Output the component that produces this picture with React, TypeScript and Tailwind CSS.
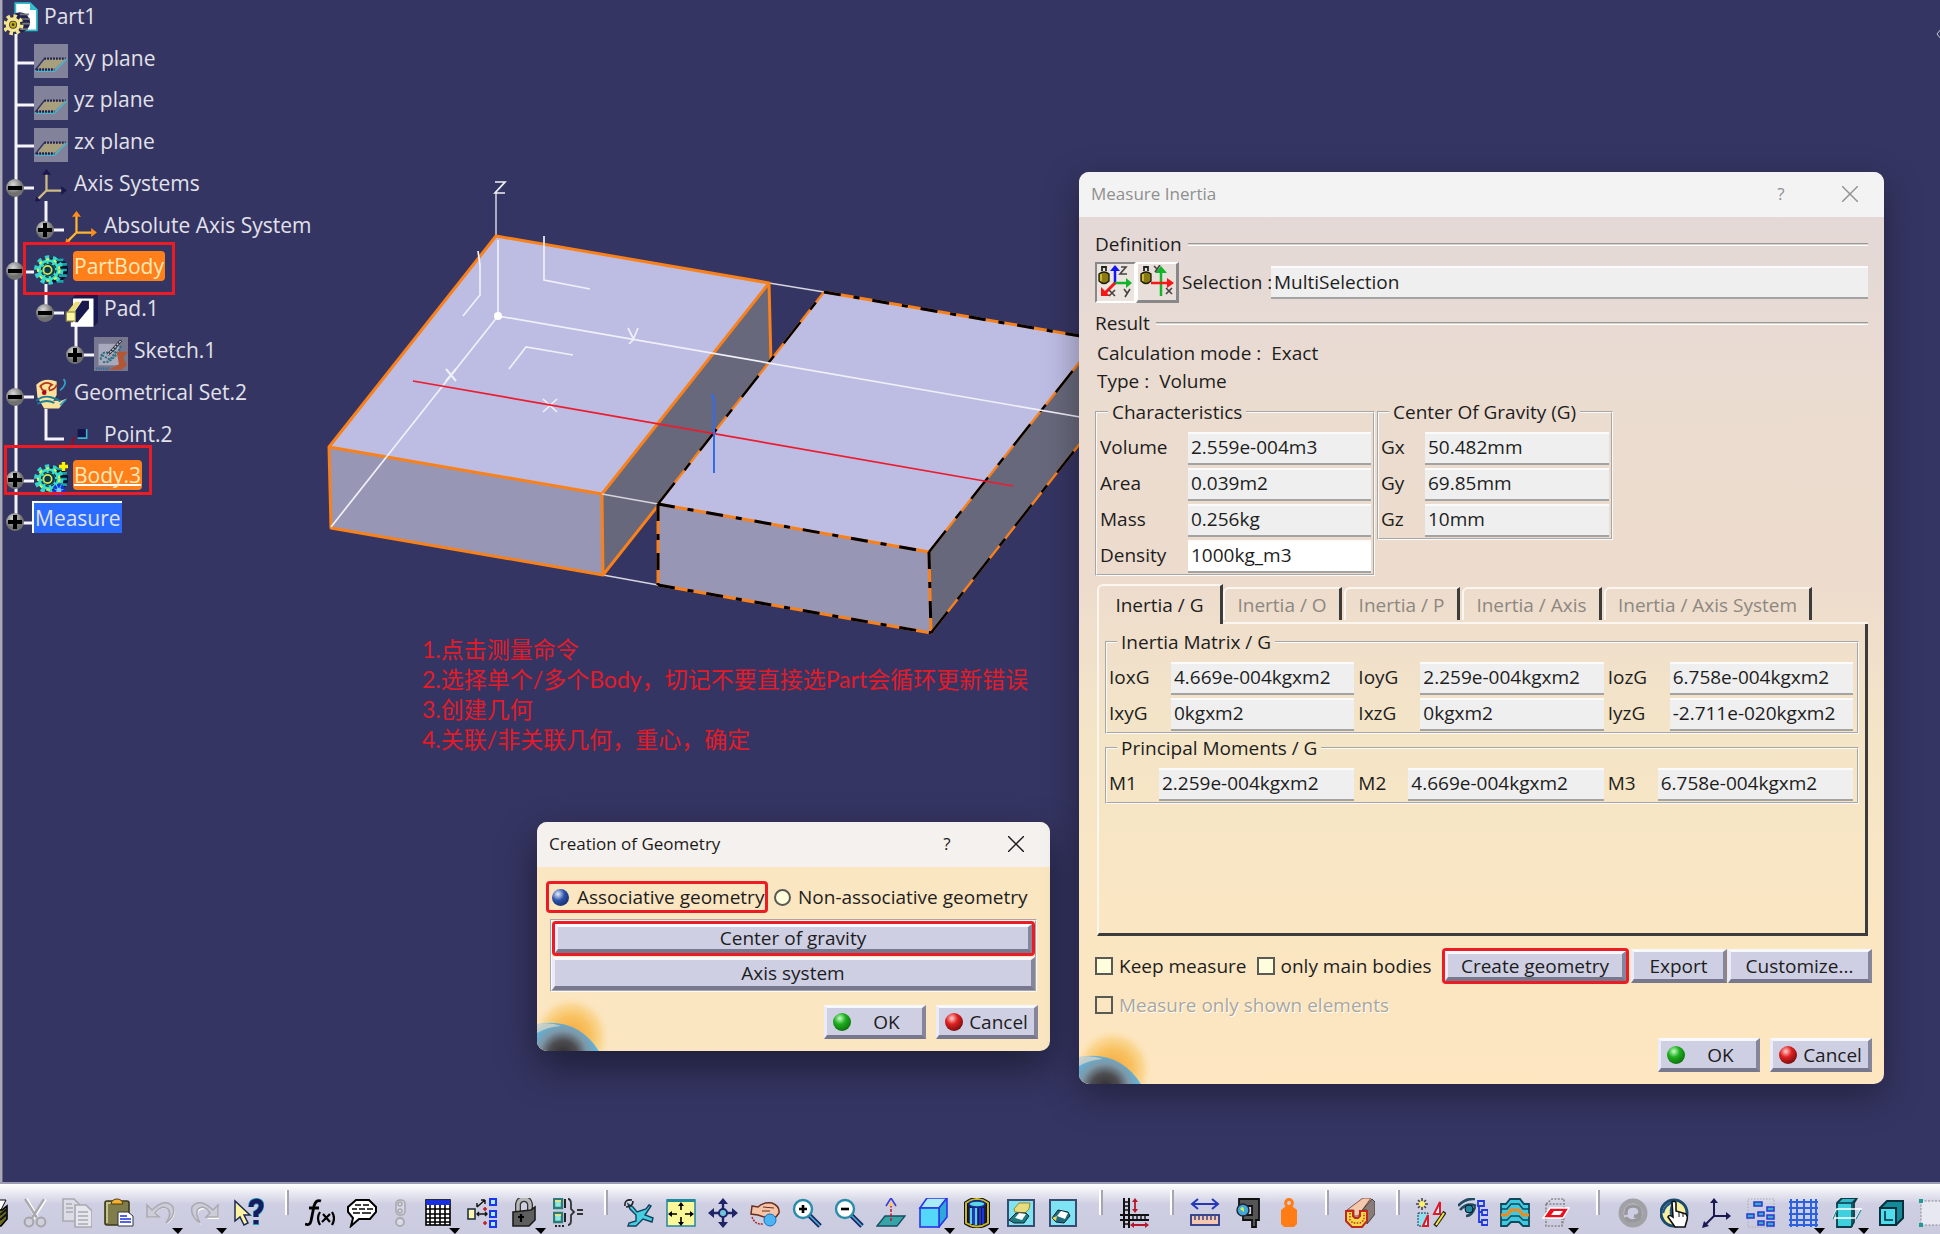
import React, { useState } from 'react';

const Svg = ({ children, size = 30 }: { children: React.ReactNode; size?: number }) => (
  <svg width={size} height={size} viewBox="0 0 30 30" fill="none" className="shrink-0">
    {children}
  </svg>
);

/* ---------- tree icons ---------- */

const PlaneIcon = () => (
  <Svg size={34}>
    <rect width="30" height="30" fill="#82829a" />
    <path d="M3 22L10 13H28L18 22Z" fill="#a89f7c" />
    <path d="M9 13H28" stroke="#1c1c4c" strokeWidth="2" strokeDasharray="1.6 1" />
    <path d="M1 23L9 13" stroke="#35355e" strokeWidth="1.2" />
    <path d="M1 24H18L29 13" stroke="#4fb3c8" strokeWidth="1.5" />
    <path d="M2 22.5H18" stroke="#1c1c4c" strokeWidth="2" strokeDasharray="1.6 1" />
  </Svg>
);

const PartIcon = () => (
  <Svg size={34}>
    <path d="M10 1H23L29 7V25H10Z" fill="#fff" stroke="#2fc0d0" strokeWidth="1.6" />
    <path d="M23 1V7H29Z" fill="#2fc0d0" />
    <circle cx="14" cy="18" r="9" fill="#22224e" />
    <path d="M14 11H22M16 15H23M16 19H23M14 24H21" stroke="#777" strokeWidth="1.5" />
    <circle cx="8" cy="20" r="7.5" stroke="#f5e68c" strokeWidth="3.5" strokeDasharray="3 2.9" />
    <circle cx="8" cy="20" r="5" fill="#353563" stroke="#f5e68c" strokeWidth="3" />
    <circle cx="8" cy="20" r="2" stroke="#c9b400" strokeWidth="1.5" />
  </Svg>
);

const AxisIcon = ({ color, tip }: { color: string; tip: string }) => (
  <Svg size={34}>
    <path d="M11 4V19H26M11 19L3 27" stroke={color} strokeWidth="2" />
    <path d="M11 0L15 5H7ZM29 19L24 15V23Z" fill={tip} />
    <path d="M1 29L2 24L6 28Z" fill={tip} />
  </Svg>
);

const GearIcon = ({ plus }: { plus?: boolean }) => (
  <Svg size={34}>
    <circle cx="19" cy="15" r="11" fill="#04102e" />
    <path d="M20 6H26M22 10H29M23 15H29M22 20H29M20 25H26" stroke="#1ba3a8" strokeWidth="2.4" />
    <circle cx="13" cy="15" r="11" stroke="#2fd6d0" strokeWidth="4" strokeDasharray="3.6 3.3" />
    <circle cx="13" cy="15" r="7.5" fill="#0b3a50" stroke="#39e0c8" strokeWidth="4" />
    <circle cx="13" cy="15" r="9.5" stroke="#d4f05a" strokeWidth="1.8" strokeDasharray="3 4" />
    <circle cx="13" cy="15" r="6.4" stroke="#0a2c48" strokeWidth="1.2" strokeDasharray="3 2" />
    <circle cx="12" cy="15" r="3.6" stroke="#d9e84a" strokeWidth="1.5" />
    {plus && (
      <>
        <path d="M26 0V8M22 4H30" stroke="#fff200" strokeWidth="3" />
        <circle cx="22" cy="25" r="4" fill="#6fd0ff" stroke="#1433e6" strokeWidth="3.4" strokeDasharray="2.6 0.8" />
      </>
    )}
  </Svg>
);

const PadIcon = () => (
  <Svg size={34}>
    <path d="M10 0H30V24L26 28V4H6Z" fill="#191950" />
    <path d="M8 3H26V28H6V24H8Z" fill="#fff" />
    <path d="M10 14L16 5H22V12L12 24H10Z" fill="#191950" />
    <path d="M3 15L10 6H15L9 15Z" fill="#e9dd78" />
    <rect x="2" y="15" width="8" height="8" fill="#fdf7a5" stroke="#8a8440" />
  </Svg>
);

const SketchIcon = () => (
  <Svg size={34}>
    <rect width="30" height="30" fill="#77778f" />
    <rect x="4" y="6" width="18" height="19" fill="#a9a9bd" />
    <path d="M6 20Q6 12 13 14Q18 14 22 5M8 22Q16 24 24 8M7 16L14 20L20 12" stroke="#2b6d7c" strokeWidth="1.6" strokeDasharray="2 1" />
    <path d="M12 16L24 3" stroke="#1c1c4c" strokeWidth="2.4" />
    <path d="M12 16L24 3" stroke="#d7d29a" strokeWidth="1.2" strokeDasharray="2 1" />
    <path d="M20 13H30L26 18L29 25L24 29H13L22 24Z" fill="#b25635" />
    <path d="M2 28H14" stroke="#2b6d9c" strokeWidth="2" strokeDasharray="1 1" />
  </Svg>
);

const GeoSetIcon = () => (
  <Svg size={34}>
    <path d="M2 6Q9 -1 20 3V15L17 20H24L29 18L22 27H9L3 17Z" fill="#fce29a" />
    <path d="M5 8Q10 2 16 6Q12 8 14 11Q19 10 20 6M6 6Q6 12 11 11" stroke="#b3371d" strokeWidth="1.5" />
    <circle cx="9" cy="13" r="2" fill="#b00020" />
    <path d="M2 20Q8 15 15 17T23 21M3 23Q10 18 18 22" stroke="#177f9a" strokeWidth="1.7" />
    <path d="M26 1Q30 5 23 11M23 24L28 19" stroke="#2fa3c8" strokeWidth="1.5" />
  </Svg>
);

const PointIcon = () => (
  <Svg size={34}>
    <rect x="12" y="8" width="8" height="8" fill="#15154d" />
    <path d="M20 8V16H12" stroke="#36b5cc" strokeWidth="1.4" />
    <path d="M3 26L8 22L7 19L10 15" stroke="#8e1020" strokeWidth="1.6" />
  </Svg>
);

const TREE = [
  { label: 'Part1', pad: 'pl-1', icon: <PartIcon /> },
  { label: 'xy plane', pad: 'pl-[34px]', icon: <PlaneIcon /> },
  { label: 'yz plane', pad: 'pl-[34px]', icon: <PlaneIcon /> },
  { label: 'zx plane', pad: 'pl-[34px]', icon: <PlaneIcon /> },
  { label: 'Axis Systems', pad: 'pl-[34px]', icon: <AxisIcon color="#cdbd84" tip="#1b1650" /> },
  { label: 'Absolute Axis System', pad: 'pl-[64px]', icon: <AxisIcon color="#ffb52e" tip="#ff8c1a" /> },
  { label: 'PartBody', pad: 'pl-[34px]', icon: <GearIcon />, look: 'bg-[#ff7f1a] text-[#ffe9b8] rounded-sm' },
  { label: 'Pad.1', pad: 'pl-[64px]', icon: <PadIcon /> },
  { label: 'Sketch.1', pad: 'pl-[94px]', icon: <SketchIcon /> },
  { label: 'Geometrical Set.2', pad: 'pl-[34px]', icon: <GeoSetIcon /> },
  { label: 'Point.2', pad: 'pl-[64px]', icon: <PointIcon /> },
  {
    label: 'Body.3',
    pad: 'pl-[34px]',
    icon: <GearIcon plus />,
    look: 'bg-[#ff7f1a] text-[#ffe9b8] rounded-sm underline decoration-white decoration-2 [text-decoration-skip-ink:none]',
  },
  { label: 'Measure', pad: 'pl-8', icon: null, look: 'bg-[#2a6cff] border-t-2 border-l-2 border-white' },
];

const KNOBS = [
  { x: 15, y: 188, open: true },
  { x: 45, y: 230, open: false },
  { x: 15, y: 271, open: true },
  { x: 45, y: 313, open: true },
  { x: 75, y: 355, open: false },
  { x: 15, y: 397, open: true },
  { x: 15, y: 480, open: false },
  { x: 15, y: 522, open: false },
];

const SpecTree = () => (
  <div className="relative flow-root">
    <svg width="140" height="540" className="absolute top-0 left-0">
      <defs>
        <radialGradient id="knob" cx="40%" cy="30%">
          <stop offset="0" stopColor="#d8d8d8" />
          <stop offset="1" stopColor="#707070" />
        </radialGradient>
      </defs>
      <path
        d="M16 34V522M16 63H34M16 105H34M16 146H34M16 188H34M46 201V230H64M16 272H34M46 284V313H64M76 326V355H94M16 397H34M46 409V439H64M16 481H34M16 523H34"
        stroke="#f4f4fa"
        strokeWidth="3"
        fill="none"
      />
      {KNOBS.map((k) => (
        <g key={`${k.x}-${k.y}`}>
          <circle cx={k.x} cy={k.y} r="9" fill="url(#knob)" />
          <path d={`M${k.x - 7} ${k.y}h14`} stroke="#000" strokeWidth="4" />
          {!k.open && <path d={`M${k.x} ${k.y - 7}v14`} stroke="#000" strokeWidth="4" />}
        </g>
      ))}
    </svg>
    <ul className="relative -mt-[5px] flex h-[543px] w-[340px] flex-col text-[21px] leading-[30px] text-[#e2e2ea]">
      {TREE.map((node) => (
        <li key={node.label} className={`flex flex-1 items-center ${node.pad}`}>
          {node.icon && <span className="mt-[7px] mr-[5px] shrink-0">{node.icon}</span>}
          <span className={`px-px whitespace-nowrap ${node.look ?? ''}`}>{node.label}</span>
        </li>
      ))}
    </ul>
    <div className="absolute top-[242px] left-[23px] h-[53px] w-[152px] border-[3px] border-[#ed1c24]" />
    <div className="absolute top-[445px] left-1 h-[50px] w-[148px] border-[3px] border-[#ed1c24]" />
  </div>
);

/* ---------- 3D scene ---------- */

const Scene = () => (
  <svg className="absolute inset-0 h-full w-full" fill="none">
    <g stroke="#d5d5de" strokeWidth="1.5">
      <path d="M769 283L824 292M603 575L658 585M496 193V236" />
    </g>
    <path d="M602 494L769 283L771 363L603 575Z" fill="#67687b" />
    <path d="M496 236L769 283L602 494L329 447Z" fill="#bdbce3" />
    <path d="M329 447L602 494L603 575L331 528Z" fill="#9896b5" />
    <g stroke="#fa8019" strokeWidth="3" strokeLinejoin="round">
      <path d="M496 236L769 283L771 363L603 575L331 528L329 447ZM329 447L602 494L603 575M602 494L769 283" />
    </g>
    <path d="M602 494L658 504" stroke="#d5d5de" strokeWidth="1.5" />

    <path d="M824 292L1098 339L929 552L658 504Z" fill="#bdbce3" />
    <path d="M658 504L929 552L931 633L658 585Z" fill="#9896b5" />
    <path d="M929 552L1098 339L1100 418L931 633Z" fill="#67687b" />
    <g stroke="#fa8019" strokeWidth="3">
      <path d="M824 292L1098 339M658 504L929 552M658 585L931 633M658 504V585M929 552L931 633" />
      <path d="M824 292L658 504M1098 339L929 552M1100 418L931 633" strokeWidth="2.4" />
    </g>
    <g stroke="#000" strokeWidth="3" strokeDasharray="17 13 6 13">
      <path d="M658 504L929 552M658 585L931 633M824 292L1098 339M658 504V585M929 552L931 633" />
      <path d="M658 504L824 292M929 552L1098 339M931 633L1100 418" strokeWidth="2.4" strokeDasharray="27 16 9 16" />
    </g>

    <g stroke="#f0f0f8" strokeWidth="1.7">
      <path d="M498 240V316L1080 417M498 316L331 527" />
      <path d="M478 251L480 265V295L463 316M544 236V280L590 289M509 369L526 347L573 355" />
      <path d="M543 399L557 412M557 399L543 412" />
      <path d="M495 182H505L495 193H505" />
      <path d="M446 369L456 381M456 369L446 381" strokeWidth="2" />
      <path d="M628 328L633 338M638 328L633 340L629 344" />
    </g>
    <circle cx="498" cy="316" r="4" fill="#fff" />
    <path d="M413 381L1013 486" stroke="#ec1b2e" strokeWidth="1.7" />
    <path d="M712 394L714 402V473" stroke="#2f6cf0" strokeWidth="2" />
    <path d="M1941 29L1937 34L1941 39" stroke="#c8c8d8" />
  </svg>
);

/* ---------- dialog pieces ---------- */

const BEVEL =
  'flex items-center justify-center border-t-[3px] border-l-[3px] border-r-4 border-b-4 border-t-[#f8f8ff] border-l-[#ebebfa] border-r-[#85859b] border-b-[#77778e] bg-[#cfcfe4] whitespace-nowrap';

const Ball = ({ color }: { color: 'green' | 'red' }) => (
  <span
    className={`h-[18px] w-[18px] shrink-0 rounded-full ${
      color === 'green'
        ? 'bg-[radial-gradient(circle_at_38%_30%,#c8ffc8,#1fae1f_35%,#034f03)]'
        : 'bg-[radial-gradient(circle_at_38%_30%,#ffd0d0,#e02020_35%,#3d0505)]'
    }`}
  />
);

const OkCancel = () => (
  <>
    <button type="button" className={`${BEVEL} h-[34px] w-[102px]`}>
      <span className="flex w-full items-center pl-1.5">
        <Ball color="green" />
        <span className="flex-1 text-center">OK</span>
      </span>
    </button>
    <button type="button" className={`${BEVEL} h-[34px] w-[102px] gap-1.5`}>
      <Ball color="red" />
      Cancel
    </button>
  </>
);

const TitleBar = ({ title, look }: { title: string; look: string }) => (
  <div className={`flex h-[45px] shrink-0 items-center pb-0.5 pl-3 text-[17px] ${look}`}>
    <h2 className="flex-1">{title}</h2>
    <button type="button" className="w-[70px] text-center" aria-label="Help">
      ?
    </button>
    <button type="button" className="flex w-[68px] justify-center" aria-label="Close">
      <svg width="16" height="16" stroke="currentColor" strokeWidth="1.4">
        <path d="M0 0L16 16M16 0L0 16" />
      </svg>
    </button>
  </div>
);

const Planet = ({ id }: { id: string }) => (
  <svg width="80" height="60" className="absolute bottom-0 left-0">
    <defs>
      <radialGradient id={`${id}-glow`}>
        <stop offset="0" stopColor="#f6a53c" />
        <stop offset="0.5" stopColor="#f8c262" />
        <stop offset="0.75" stopColor="#f9d080" stopOpacity="0.7" />
        <stop offset="1" stopColor="#fde6c0" stopOpacity="0" />
      </radialGradient>
      <radialGradient id={`${id}-body`} gradientUnits="userSpaceOnUse" cx="26" cy="64" r="40">
        <stop offset="0" stopColor="#2e2c2e" />
        <stop offset="0.35" stopColor="#4d4c50" />
        <stop offset="0.6" stopColor="#7d97a6" />
        <stop offset="0.85" stopColor="#62b4dc" />
        <stop offset="1" stopColor="#b9dbe2" />
      </radialGradient>
    </defs>
    <ellipse cx="34" cy="46" rx="40" ry="42" fill={`url(#${id}-glow)`} />
    <path d="M0 33Q40 26 62 60H0Z" fill={`url(#${id}-body)`} />
    <path d="M0 33Q14 31 24 35Q10 36 0 42Z" fill="#d6d2c4" opacity="0.8" />
  </svg>
);

const Field = ({ id, label, value, cols, editable }: {
  id: string;
  label: string;
  value: string;
  cols: string;
  editable?: boolean;
}) => (
  <div className={`grid h-9 items-center ${cols}`}>
    <label htmlFor={id} className="pb-0.5">
      {label}
    </label>
    <input
      id={id}
      defaultValue={value}
      readOnly={!editable}
      className={`h-[33px] w-full min-w-0 border-t-2 border-b-2 border-t-[#fbfbfb] border-b-[#a3a3a3] px-[3px] pb-0.5 ${
        editable ? 'bg-white' : 'bg-[#efefef]'
      }`}
    />
  </div>
);

const Group = ({ title, className, children }: {
  title: string;
  className: string;
  children: React.ReactNode;
}) => (
  <fieldset className={`min-w-0 border-2 border-[#fafafa] [border-style:groove] ${className}`}>
    <legend className="ml-2 h-7 px-1 leading-7">{title}</legend>
    {children}
  </fieldset>
);

const SectionTitle = ({ children }: { children: React.ReactNode }) => (
  <div className="flex h-7 items-center gap-1.5">
    <h3>{children}</h3>
    <div className="h-[3px] flex-1 border-t border-b border-t-[#999] border-b-white bg-[#d8d2cc]" />
  </div>
);

const CheckBox = ({ label, disabled }: { label: string; disabled?: boolean }) => (
  <label className={`flex items-center gap-1.5 ${disabled ? 'text-[#aaa69c] [text-shadow:1px_1px_0_#fff]' : ''}`}>
    <input
      type="checkbox"
      disabled={disabled}
      className={`h-[18px] w-[18px] appearance-none border-2 border-[#5a5a55] checked:bg-[#5a5a55] ${
        disabled ? 'bg-transparent' : 'bg-[#fffedc]'
      }`}
    />
    {label}
  </label>
);

const Cylinder = () => (
  <>
    <path d="M1 9Q6 5 11 9V16Q6 21 1 16Z" fill="#8a7a12" stroke="#1d1a05" strokeWidth="1.3" />
    <path d="M3 9V16" stroke="#d8c93a" strokeWidth="1.6" />
    <path d="M4 6V2H8V6" stroke="#222" strokeWidth="1.8" />
  </>
);

const TABS = [
  { name: 'Inertia / G', width: 'w-[126px]' },
  { name: 'Inertia / O', width: 'w-[121px]' },
  { name: 'Inertia / P', width: 'w-[118px]' },
  { name: 'Inertia / Axis', width: 'w-[142px]' },
  { name: 'Inertia / Axis System', width: 'w-[210px]' },
];

const MeasureInertia = () => {
  const [tab, setTab] = useState('Inertia / G');

  return (
    <section className="absolute top-[172px] left-[1079px] w-[805px] overflow-hidden rounded-[10px] bg-[linear-gradient(#e4d8d7,#e5d9d6_10%,#ebdcd0_25%,#eddccd_45%,#f4e5c7_62%,#fbe6c2_85%,#fde6c0)] text-[19px] leading-7 text-[#1d1d1d] shadow-[0_12px_36px_rgba(0,0,0,0.35)]">
      <TitleBar title="Measure Inertia" look="bg-[#f3f3f3] text-[#8f8f8f]" />
      <div className="px-4 pt-[13px]">
        <SectionTitle>Definition</SectionTitle>
        <div className="mt-1 flex h-[41px] items-center">
          <button
            type="button"
            aria-label="Measure Inertia 3D"
            className="flex h-[41px] w-[41px] items-center justify-center border-2 border-t-[#888] border-r-white border-b-white border-l-[#888] bg-[#ece4df]"
          >
            <svg width="35" height="35" viewBox="0 0 35 35" fill="none">
              <Cylinder />
              <path d="M17 18V4" stroke="#1616f5" strokeWidth="2.5" />
              <path d="M17 0L22 6H12Z" fill="#1616f5" />
              <path d="M17 18H29" stroke="#12b52a" strokeWidth="2.5" />
              <path d="M34 18L28 13V23Z" fill="#12b52a" />
              <path d="M17 18L7 28" stroke="#f51616" strokeWidth="3" />
              <path d="M3 31V22L12 31Z" fill="#f51616" />
              <path d="M23 2H28L22 9H29M11 25L17 31M17 25L11 31M26 24L29 28M32 24L27 32" stroke="#444" strokeWidth="1.6" />
            </svg>
          </button>
          <button
            type="button"
            aria-label="Measure Inertia 2D"
            className="flex h-[41px] w-[43px] items-center justify-center border-t-2 border-r-[3px] border-b-[3px] border-l-2 border-t-white border-r-[#888] border-b-[#888] border-l-white bg-[#e9dfda]"
          >
            <svg width="35" height="35" viewBox="0 0 35 35" fill="none">
              <Cylinder />
              <path d="M21 31V5" stroke="#12b52a" strokeWidth="2.5" />
              <path d="M21 1L27 8H15Z" fill="#12b52a" />
              <path d="M11 18H28" stroke="#f51616" strokeWidth="2.5" />
              <path d="M34 18L27 13V23Z" fill="#f51616" />
              <path d="M14 1L17 4M20 0L15 7M26 23L32 29M32 23L26 29" stroke="#444" strokeWidth="1.6" />
            </svg>
          </button>
          <label htmlFor="selection" className="w-[92px] pb-0.5 pl-[3px] whitespace-nowrap">
            Selection :
          </label>
          <input
            id="selection"
            readOnly
            defaultValue="MultiSelection"
            className="h-[33px] min-w-0 flex-1 border-t-2 border-b-2 border-t-[#fbfbfb] border-b-[#a3a3a3] bg-[#efefef] px-[3px] pb-0.5"
          />
        </div>
        <div className="mt-1.5">
          <SectionTitle>Result</SectionTitle>
        </div>
        <p className="mt-0.5 flex gap-2.5 pl-0.5">
          <span>Calculation mode :</span>
          <span>Exact</span>
        </p>
        <p className="flex gap-2.5 pl-0.5">
          <span>Type :</span>
          <span>Volume</span>
        </p>

        <div className="mt-[3px] flex items-start gap-0.5">
          <Group title="Characteristics" className="w-[280px] pt-1 pr-0.5 pl-[3px]">
            <Field id="volume" label="Volume" value="2.559e-004m3" cols="grid-cols-[88px_1fr]" />
            <Field id="area" label="Area" value="0.039m2" cols="grid-cols-[88px_1fr]" />
            <Field id="mass" label="Mass" value="0.256kg" cols="grid-cols-[88px_1fr]" />
            <Field id="density" label="Density" value="1000kg_m3" cols="grid-cols-[88px_1fr]" editable />
          </Group>
          <Group title="Center Of Gravity (G)" className="w-[236px] pt-1 pr-0.5 pl-0.5">
            <Field id="gx" label="Gx" value="50.482mm" cols="grid-cols-[44px_1fr]" />
            <Field id="gy" label="Gy" value="69.85mm" cols="grid-cols-[44px_1fr]" />
            <Field id="gz" label="Gz" value="10mm" cols="grid-cols-[44px_1fr]" />
          </Group>
        </div>

        <div className="mt-2 ml-0.5 flex h-10 items-stretch" role="tablist">
          {TABS.map((t) => (
            <div
              key={t.name}
              className={`${t.width} shrink-0 ${
                tab === t.name ? '' : 'border-b-2 border-[#fbf6f0] pt-[3px] pr-0.5 pb-0.5'
              }`}
            >
              <button
                type="button"
                role="tab"
                aria-selected={tab === t.name}
                onClick={() => setTab(t.name)}
                className={`h-full w-full rounded-tl-md border-t-2 border-r-[3px] border-l-2 border-t-[#fbf6f0] border-r-[#3c3c3c] border-l-[#fbf6f0] whitespace-nowrap ${
                  tab === t.name ? '' : 'text-[#8d8782]'
                }`}
              >
                {t.name}
              </button>
            </div>
          ))}
          <div className="flex-1 border-b-2 border-[#fbf6f0]" />
        </div>
        <div className="ml-0.5 h-[312px] border-r-[3px] border-b-[3px] border-l-2 border-r-[#3c3c3c] border-b-[#3c3c3c] border-l-[#fbf6f0] px-1.5 pt-1">
          <Group title="Inertia Matrix / G" className="pt-1 pr-1 pl-0.5">
            <div className="grid grid-cols-3 gap-x-1">
              <Field id="ioxg" label="IoxG" value="4.669e-004kgxm2" cols="grid-cols-[62px_1fr]" />
              <Field id="ioyg" label="IoyG" value="2.259e-004kgxm2" cols="grid-cols-[62px_1fr]" />
              <Field id="iozg" label="IozG" value="6.758e-004kgxm2" cols="grid-cols-[62px_1fr]" />
              <Field id="ixyg" label="IxyG" value="0kgxm2" cols="grid-cols-[62px_1fr]" />
              <Field id="ixzg" label="IxzG" value="0kgxm2" cols="grid-cols-[62px_1fr]" />
              <Field id="iyzg" label="IyzG" value="-2.711e-020kgxm2" cols="grid-cols-[62px_1fr]" />
            </div>
          </Group>
          <Group title="Principal Moments / G" className="pt-1 pr-1 pl-0.5">
            <div className="grid grid-cols-3 gap-x-1">
              <Field id="m1" label="M1" value="2.259e-004kgxm2" cols="grid-cols-[50px_1fr]" />
              <Field id="m2" label="M2" value="4.669e-004kgxm2" cols="grid-cols-[50px_1fr]" />
              <Field id="m3" label="M3" value="6.758e-004kgxm2" cols="grid-cols-[50px_1fr]" />
            </div>
          </Group>
        </div>
      </div>

      <div className="mt-3 flex h-9 items-center pr-3 pl-4">
        <div className="flex flex-1 gap-2.5">
          <CheckBox label="Keep measure" />
          <CheckBox label="only main bodies" />
        </div>
        <div className="mr-0.5 flex h-9 w-[187px] rounded-sm border-[3px] border-[#ed1c24]">
          <button type="button" className={`${BEVEL} flex-1`}>
            Create geometry
          </button>
        </div>
        <button type="button" className={`${BEVEL} mr-px h-[34px] w-24`}>
          Export
        </button>
        <button type="button" className={`${BEVEL} h-[34px] w-36`}>
          Customize...
        </button>
      </div>
      <div className="mt-[7px] pl-4">
        <CheckBox label="Measure only shown elements" disabled />
      </div>
      <div className="relative mt-[19px] flex justify-end gap-2.5 pr-3 pb-3">
        <Planet id="inertia" />
        <OkCancel />
      </div>
    </section>
  );
};

const RADIO =
  'h-[17px] w-[17px] shrink-0 appearance-none rounded-full border-2 border-[#5a5a55] bg-[#fffedc] checked:border-0 checked:bg-[radial-gradient(circle_at_35%_30%,#e6eeff,#2c52a8_40%,#0a1a50)]';

const CreationOfGeometry = () => (
  <section className="absolute top-[822px] left-[537px] w-[513px] overflow-hidden rounded-[10px] bg-[#fbe6c2] text-[19px] leading-7 text-[#1d1d1d] shadow-[0_16px_40px_rgba(0,0,0,0.45)]">
    <TitleBar title="Creation of Geometry" look="bg-[#f5f1ee] text-[#1a1a1a]" />
    <div className="mt-3.5 flex h-8 items-center gap-1.5 pl-[9px] whitespace-nowrap">
      <label className="flex h-8 w-[222px] items-center gap-2 rounded-sm border-[3px] border-[#ed1c24] pl-[3px]">
        <input type="radio" name="assoc" defaultChecked className={RADIO} />
        Associative geometry
      </label>
      <label className="flex items-center gap-[7px]">
        <input type="radio" name="assoc" className={RADIO} />
        Non-associative geometry
      </label>
    </div>
    <div className="mx-[13px] mt-1.5 flex flex-col gap-px border-2 border-[#fafafa] [border-style:groove]">
      <div className="flex h-[35px] rounded-sm border-[3px] border-[#ed1c24]">
        <button type="button" className={`${BEVEL} flex-1`}>
          Center of gravity
        </button>
      </div>
      <button type="button" className={`${BEVEL} h-[33px]`}>
        Axis system
      </button>
    </div>
    <div className="relative mt-[13px] flex justify-end gap-2.5 pr-3 pb-3">
      <Planet id="creation" />
      <OkCancel />
    </div>
  </section>
);

/* ---------- bottom toolbar ---------- */

type Tool = { name: string; icon: React.ReactNode; menu?: boolean; slim?: boolean };

const GROUPS: Tool[][] = [
  [
    {
      name: 'Print',
      icon: (
        <>
          <path d="M14 2H28L22 14H12Z" fill="#fff" stroke="#000" />
          <path d="M10 12H24L29 8V21L23 28H10Z" fill="#6b6b1e" stroke="#000" strokeWidth="1.6" />
          <path d="M22 17L29 11M22 22L29 16" stroke="#111" strokeWidth="2" />
        </>
      ),
    },
    {
      name: 'Cut',
      icon: (
        <>
          <path d="M6 1L17 20M25 1L13 20" stroke="#fff" strokeWidth="4" />
          <path d="M5 1L17 20M24 1L12 20" stroke="#a9a9b0" strokeWidth="2.4" />
          <circle cx="9" cy="24" r="4.4" fill="#d0d0dc" stroke="#a4a4aa" strokeWidth="2" />
          <circle cx="21" cy="24" r="4.4" fill="#d0d0dc" stroke="#a4a4aa" strokeWidth="2" />
        </>
      ),
    },
    {
      name: 'Copy',
      icon: (
        <>
          <path d="M1 1H12L17 6V23H1Z" fill="#dcdce6" stroke="#a9a9b0" strokeWidth="1.6" />
          <path d="M13 7H24L30 13V29H13Z" fill="#e6e6ee" stroke="#a9a9b0" strokeWidth="1.6" />
          <path d="M4 6H10M4 10H11M4 14H11M16 14H26M16 18H26M16 22H26M16 26H26" stroke="#a9a9b0" strokeWidth="1.4" />
        </>
      ),
    },
    {
      name: 'Paste',
      icon: (
        <>
          <rect x="1" y="3" width="24" height="24" rx="2" fill="#7f7d4c" stroke="#3c3a18" strokeWidth="1.6" />
          <path d="M3 25V5H12" stroke="#c6c48e" strokeWidth="2" />
          <path d="M7 6Q8 1 13 1T19 6Z" fill="#f0b432" stroke="#5a3a08" />
          <path d="M14 14H24L29 18V28H14Z" fill="#fff" stroke="#334" />
          <path d="M16 18H23M16 21H27M16 24H27" stroke="#1b2fe0" strokeWidth="1.5" />
        </>
      ),
    },
    {
      name: 'Undo',
      menu: true,
      icon: (
        <>
          <path d="M2 9V20H14L10 16Q16 7 22 12Q26 17 21 26Q31 19 28 10Q21 0 7 13Z" fill="#fff" />
          <path d="M1 7V19H13L9 15Q16 6 22 11Q26 16 20 25Q30 18 27 9Q20 -1 6 12Z" fill="#cdcdda" stroke="#a9a9b0" strokeWidth="1.5" />
        </>
      ),
    },
    {
      name: 'Redo',
      menu: true,
      icon: (
        <>
          <path d="M29 9V21H17L21 17Q15 8 9 13Q6 18 11 27Q1 20 3 11Q10 1 24 13Z" fill="#fff" />
          <path d="M28 7V19H16L20 15Q14 6 8 11Q5 16 10 25Q0 18 2 9Q9 -1 23 12Z" fill="#cdcdda" stroke="#a9a9b0" strokeWidth="1.5" />
        </>
      ),
    },
    {
      name: "What's This?",
      icon: (
        <>
          <path d="M1 3V23L6 19L10 27L14 25L10 17H16Z" fill="#fdf3a0" stroke="#1c2a52" strokeWidth="1.5" />
          <path d="M17 9Q17 3 23 3Q28 4 27 9Q26 13 22 15V19M22 22V27" stroke="#17a3b8" strokeWidth="6" />
          <path d="M17 9Q17 3 23 3Q28 4 27 9Q26 13 22 15V19M22 22V26" stroke="#1b1a60" strokeWidth="4.6" />
        </>
      ),
    },
  ],
  [
    {
      name: 'Formula',
      icon: (
        <>
          <path d="M16 3Q11 1 9 8L6 23Q5 28 0 26M4 10H14" stroke="#000" strokeWidth="2.8" />
          <path d="M15 14Q11 20 15 27M27 14Q31 20 27 27M18 16L25 24M25 16L17 24" stroke="#000" strokeWidth="2.2" />
        </>
      ),
    },
    {
      name: 'Comment',
      icon: (
        <>
          <path d="M9 2H22L29 9V14L23 21H12L4 28L6 20L1 14V9Z" fill="#fff" stroke="#000" strokeWidth="2" />
          <path d="M8 7H14M16 7H22M5 11H10M12 11H18M20 11H26M6 15H13M15 15H24" stroke="#000" strokeWidth="1.6" />
        </>
      ),
    },
    {
      name: 'Check',
      slim: true,
      icon: (
        <>
          <rect x="11" y="2" width="9" height="15" rx="4" fill="#dadae6" stroke="#a9a9b0" strokeWidth="1.6" />
          <circle cx="15" cy="6" r="2" stroke="#a9a9b0" strokeWidth="1.6" />
          <circle cx="15" cy="13" r="2" stroke="#a9a9b0" strokeWidth="1.6" />
          <circle cx="15" cy="24" r="4" fill="#dadae6" stroke="#a9a9b0" strokeWidth="1.8" />
        </>
      ),
    },
    {
      name: 'Design Table',
      menu: true,
      icon: (
        <>
          <rect x="3" y="2" width="24" height="25" fill="#fff" stroke="#000" strokeWidth="1.6" />
          <rect x="3" y="2" width="24" height="5" fill="#1a2fe0" />
          <path d="M7 7V27M12 7V27M17 7V27M22 7V27M3 11H27M3 16H27M3 20H27M3 24H27" stroke="#000" strokeWidth="1.6" />
        </>
      ),
    },
    {
      name: 'Knowledge Inspector',
      icon: (
        <>
          <rect x="1" y="11" width="7" height="10" fill="#fdf6b0" stroke="#234" strokeWidth="1.6" />
          <path d="M10 9L18 2M18 2V6M18 2H14M10 9V5M10 16H20M12 14L10 16L12 18M18 14L20 16L18 18" stroke="#111" strokeWidth="1.4" />
          <path d="M18 9V13M16 11H20M18 23V27M16 25H20" stroke="#c41a2a" strokeWidth="1.6" />
          <path d="M23 1H29V7H23ZM23 13H29V19H23ZM23 23H29V29H23Z" fill="#aeeaf8" stroke="#1b36f0" strokeWidth="2" />
        </>
      ),
    },
    {
      name: 'Lock',
      menu: true,
      icon: (
        <>
          <path d="M9 14V6Q10 1 15 1Q20 1 21 6V13" stroke="#333" strokeWidth="6" />
          <path d="M9 14V6Q10 1 15 1Q20 1 21 6V13" stroke="#b8b8b8" strokeWidth="3.4" />
          <path d="M4 14L22 12L26 9V22L20 28H4Z" fill="#5e5e5e" stroke="#1c1c1c" strokeWidth="1.6" />
          <path d="M12 16V24M9 19H15" stroke="#000" strokeWidth="2.2" />
        </>
      ),
    },
    {
      name: 'Equivalent Dimensions',
      icon: (
        <>
          <path d="M1 1H9V10H1ZM1 15H9V24H1Z" fill="#8fe8e0" stroke="#2b7c78" strokeWidth="2.4" />
          <path d="M2 3H8M2 17H8" stroke="#e8e080" strokeWidth="2" />
          <path d="M12 1V10M12 15V24" stroke="#222" strokeWidth="2" />
          <path d="M15 1Q18 1 18 6V11L21 14L18 17V22Q18 27 15 27M24 12H31M24 16H31" stroke="#333" strokeWidth="1.8" />
          <path d="M2 28H11" stroke="#222" strokeWidth="2" strokeDasharray="2 1.5" />
        </>
      ),
    },
  ],
  [
    {
      name: 'Fly Mode',
      icon: (
        <>
          <path d="M4 6L9 9L13 14L22 11L25 7L27 8L21 17L29 20L28 24L19 21L12 28L4 28L5 25L12 23L12 17L6 11Z" fill="#46cfe0" stroke="#14405e" strokeWidth="1.4" />
          <path d="M1 8Q0 1 8 2M2 9Q9 9 9 3" stroke="#222" strokeWidth="1.6" />
        </>
      ),
    },
    {
      name: 'Fit All In',
      icon: (
        <>
          <rect x="1" y="2" width="28" height="26" fill="#fbf89a" stroke="#2c8ca0" strokeWidth="1.6" />
          <rect x="1" y="1" width="28" height="3" fill="#1f8a9c" />
          <path d="M15 6V12M15 19V26M4 16H11M19 16H26" stroke="#000" strokeWidth="1.6" />
          <path d="M15 4L18 8H12ZM15 28L18 24H12ZM2 16L6 13V19ZM28 16L24 13V19Z" fill="#000" />
        </>
      ),
    },
    {
      name: 'Pan',
      icon: (
        <>
          <path d="M15 4V26M4 15H26" stroke="#1d2468" strokeWidth="2.4" />
          <path d="M15 0L20 6H10ZM15 30L20 24H10ZM0 15L6 10V20ZM30 15L24 10V20Z" fill="#1d2468" />
          <circle cx="15" cy="15" r="4" fill="#6fc6dc" stroke="#1d2468" strokeWidth="2" />
        </>
      ),
    },
    {
      name: 'Rotate',
      icon: (
        <>
          <path d="M2 8L8 9Q13 4 22 5Q30 8 29 15L26 19H14L8 17L1 16Z" fill="#f4c4a8" stroke="#6a2c1c" strokeWidth="1.5" />
          <path d="M13 9L24 10M12 13H20" stroke="#6a2c1c" />
          <circle cx="20" cy="22" r="6" fill="#4cb4f0" stroke="#1b6cc0" />
          <path d="M2 19Q5 27 13 26" stroke="#b02a20" strokeWidth="1.5" strokeDasharray="2 1" />
        </>
      ),
    },
    {
      name: 'Zoom In',
      icon: (
        <>
          <path d="M17 17L28 28" stroke="#1b2468" strokeWidth="5" />
          <path d="M17 17L28 28" stroke="#4cb4d0" strokeWidth="1.6" />
          <circle cx="11" cy="11" r="9" fill="#fff" stroke="#2a8ca8" strokeWidth="2.4" />
          <path d="M11 7V15M7 11H15" stroke="#000" strokeWidth="2.6" />
        </>
      ),
    },
    {
      name: 'Zoom Out',
      icon: (
        <>
          <path d="M17 17L28 28" stroke="#1b2468" strokeWidth="5" />
          <path d="M17 17L28 28" stroke="#4cb4d0" strokeWidth="1.6" />
          <circle cx="11" cy="11" r="9" fill="#fff" stroke="#2a8ca8" strokeWidth="2.4" />
          <path d="M7 11H15" stroke="#000" strokeWidth="2.6" />
        </>
      ),
    },
    {
      name: 'Normal View',
      icon: (
        <>
          <path d="M1 28L9 18H29L21 28Z" fill="#35a5a8" stroke="#184c60" strokeWidth="1.3" />
          <path d="M15 23V5" stroke="#c41a2a" strokeWidth="1.6" strokeDasharray="3 1.5" />
          <path d="M10 8L15 0L20 8" stroke="#3a3ae0" strokeWidth="1.6" />
          <path d="M15 3L18 8H12Z" fill="#f8c860" />
        </>
      ),
    },
    {
      name: 'Isometric View',
      menu: true,
      icon: (
        <>
          <path d="M2 10L9 0H29L21 10Z" fill="#a9ecf8" stroke="#2a36e8" strokeWidth="1.6" />
          <path d="M21 10L29 0V19L21 29Z" fill="#2da8d8" stroke="#2a36e8" strokeWidth="1.6" />
          <rect x="2" y="10" width="19" height="19" fill="#55d8f8" stroke="#2a36e8" strokeWidth="1.6" />
        </>
      ),
    },
    {
      name: 'Shading with Edges',
      menu: true,
      icon: (
        <>
          <path d="M4 5V25Q15 32 26 25V5Q15 -3 4 5Z" fill="#1b1b40" stroke="#111" strokeWidth="4" />
          <path d="M4 5V25Q15 32 26 25V5Q15 -3 4 5Z" stroke="#c8b820" strokeWidth="2" />
          <ellipse cx="15" cy="6" rx="8" ry="3" fill="#5ad8e8" stroke="#1430a0" strokeWidth="1.5" />
          <path d="M9 10V26M14 10V27" stroke="#59d0f0" strokeWidth="2.4" />
          <path d="M12 10V27M18 10V27M21 10V26" stroke="#1b36e0" strokeWidth="2" />
        </>
      ),
    },
    {
      name: 'Hide/Show',
      icon: (
        <>
          <rect x="2" y="2" width="26" height="26" fill="#7ee4f4" stroke="#3a4a70" strokeWidth="2" />
          <path d="M8 11L13 5H24L23 11L19 15L9 14Z" fill="#e8dc80" stroke="#9a8a20" />
          <path d="M3 22L10 15H20L23 18L18 25H8Z" fill="#1f7c80" stroke="#123" />
          <path d="M9 20L13 15L20 16L16 22Z" fill="#fff" />
        </>
      ),
    },
    {
      name: 'Swap Visible Space',
      icon: (
        <>
          <rect x="2" y="2" width="26" height="26" fill="#7ee4f4" stroke="#3a4a70" strokeWidth="2" />
          <path d="M4 20L10 12L20 14L22 18L16 25L8 24Z" fill="#1f6c80" stroke="#123" />
          <path d="M9 18L13 13L20 15L17 21Z" fill="#fff" />
          <path d="M4 20L9 18L8 23Z" fill="#f0d850" />
        </>
      ),
    },
  ],
  [
    {
      name: 'Measure Between',
      icon: (
        <>
          <path d="M5 0V30M10 0V30M1 17H30M1 22H30" stroke="#111" strokeWidth="2" />
          <path d="M5 4H10M5 8H10M5 12H10M5 26H10M14 17V22M18 17V22M22 17V22M26 17V22" stroke="#111" strokeWidth="1.4" />
          <path d="M16 2V13M13 27H28" stroke="#b5182a" strokeWidth="1.8" />
          <path d="M16 0L19 4H13ZM16 15L19 11H13ZM11 27L15 24V30ZM30 27L26 24V30Z" fill="#b5182a" />
        </>
      ),
    },
  ],
  [
    {
      name: 'Measure Distance',
      icon: (
        <>
          <path d="M2 6H28M8 1L2 6L8 11M22 1L28 6L22 11" stroke="#2238b8" strokeWidth="2" />
          <rect x="1" y="17" width="28" height="10" fill="#f6c8b0" stroke="#283a88" strokeWidth="1.8" />
          <path d="M5 18V22M9 18V22M13 18V22M17 18V22M21 18V22M25 18V22" stroke="#283a88" strokeWidth="1.4" />
        </>
      ),
    },
    {
      name: 'Measure Item',
      icon: (
        <>
          <path d="M7 1H27V22H24V29H20V22H11V17H20V8H7Z" fill="#555" stroke="#111" strokeWidth="1.8" />
          <circle cx="11" cy="12" r="6" fill="#3fa8d8" stroke="#223" strokeWidth="1.4" />
          <path d="M8 11Q12 6 12 14Z" fill="#d8f040" />
        </>
      ),
    },
    {
      name: 'Measure Inertia',
      icon: (
        <>
          <circle cx="15" cy="5" r="3.4" stroke="#ff7d14" strokeWidth="3" />
          <path d="M7 12L12 8H18L23 12V26L20 29H10L7 26Z" fill="#ff7d14" />
        </>
      ),
    },
  ],
  [
    {
      name: 'Catalog',
      icon: (
        <>
          <path d="M2 12L18 0H26L13 18H9V12Z" fill="#f4c8ac" stroke="#8a5040" />
          <path d="M14 16L27 1L30 4V16L22 26V12H18Z" fill="#8a7a78" stroke="#444" />
          <path d="M1 13H8V18L10 20H13L15 18V13H22V23L17 29H7L1 23Z" fill="#f6d84a" stroke="#c0281c" strokeWidth="2" />
          <path d="M5 15V22L8 25H15L19 22V15" stroke="#c0281c" strokeWidth="1.4" strokeDasharray="1.5 1.5" />
        </>
      ),
    },
  ],
  [
    {
      name: 'Draft Analysis',
      icon: (
        <>
          <path d="M6 0V12M0 6H12M2 2L10 10M10 2L2 10" stroke="#444" strokeWidth="1.6" />
          <circle cx="6" cy="6" r="3" fill="#fff26a" />
          <path d="M2 15H12V28H2Z" fill="#8ee0f0" stroke="#234" strokeDasharray="2 1" />
          <path d="M7 28L12 17V28ZM18 16L24 4V16Z" fill="#fff" stroke="#e01a2a" strokeWidth="2" />
          <path d="M29 14L19 28" stroke="#222" strokeWidth="4" />
          <path d="M28 15L20 27" stroke="#f6e83a" strokeWidth="2" />
        </>
      ),
    },
    {
      name: 'Show Structure',
      icon: (
        <>
          <path d="M0 8Q7 0 17 1M2 12Q9 4 18 8M8 18Q14 18 17 9" stroke="#1f4a60" strokeWidth="2.6" />
          <circle cx="11" cy="11" r="4" fill="#1f8aa0" stroke="#012" />
          <path d="M20 3H26V8H20ZM24 12H30V17H24ZM24 22H30V27H24ZM21 8V24H24M21 14H24" stroke="#2238e0" strokeWidth="1.8" fill="none" />
        </>
      ),
    },
    {
      name: 'Curvature Analysis',
      icon: (
        <>
          <path d="M1 6H6L10 1H20L24 6H29V28H23L19 24H11L7 28H1Z" fill="#3fc8e0" stroke="#0f4a5c" strokeWidth="1.8" />
          <path d="M1 17H7L11 12H19L23 17H29" stroke="#f08a1c" strokeWidth="3" />
          <path d="M1 11H7L11 6H19L23 11H29M1 22H7L11 18H19L23 22H29" stroke="#0f4a5c" strokeWidth="1.4" />
        </>
      ),
    },
    {
      name: 'Sectioning',
      menu: true,
      icon: (
        <>
          <path d="M4 6L10 1H22V10M4 6H20M4 6V28H20V18M22 20L20 28" stroke="#888" strokeWidth="1.6" strokeDasharray="2 1.4" />
          <path d="M1 20L8 10H27L21 20Z" fill="#e80f1e" stroke="#fff" strokeWidth="1.4" />
          <path d="M9 17L12 13H21L18 17Z" fill="#fff" />
        </>
      ),
    },
  ],
  [
    {
      name: 'Update',
      icon: (
        <>
          <circle cx="15" cy="15" r="12" stroke="#a2a2a6" strokeWidth="5" />
          <path d="M8 17Q7 8 15 8Q22 8 22 14Q21 19 16 18M22 13Q24 22 15 23Q9 23 8 19" stroke="#98989c" strokeWidth="3.4" />
        </>
      ),
    },
    {
      name: 'Manual Update',
      icon: (
        <>
          <circle cx="14" cy="15" r="13" fill="#f8f0a0" stroke="#1c4a6c" strokeWidth="3" />
          <path d="M3 15Q5 6 14 4Q9 12 12 20" stroke="#1c5a8c" strokeWidth="2.4" />
          <path d="M12 4Q15 2 16 5V13L26 16Q28 18 27 22L25 29H15L8 19Q9 16 13 19Z" fill="#fff" stroke="#111" strokeWidth="1.6" />
          <path d="M19 14V19M23 15V19" stroke="#111" />
        </>
      ),
    },
    {
      name: 'Axis System',
      menu: true,
      icon: (
        <>
          <path d="M12 3V18H26M12 18L3 27" stroke="#1a1a50" strokeWidth="2" />
          <path d="M12 0L16 5H8ZM29 18L24 14V22ZM0 30L2 23L7 28Z" fill="#1a1a50" />
        </>
      ),
    },
    {
      name: 'Mean Dimensions',
      icon: (
        <>
          <rect x="2" y="1" width="26" height="28" stroke="#aaa" strokeDasharray="1.5 1.5" />
          <path d="M8 4H16V8H8ZM1 16H8V20H1ZM12 14H18V18H12ZM21 9H28V13H21ZM21 17H28V21H21ZM12 23H18V27H12ZM21 24H28V28H21Z" fill="#38b0c0" stroke="#2a36d8" strokeWidth="1.5" />
        </>
      ),
    },
    {
      name: 'Work on Support',
      menu: true,
      icon: <path d="M3 1V29M9 1V29M16 1V29M23 1V29M28 1V29M1 4H30M1 10H30M1 16H30M1 22H30M1 27H30" stroke="#2a62e0" strokeWidth="2" />,
    },
    {
      name: 'Create Datum',
      menu: true,
      icon: (
        <>
          <path d="M5 5L10 0H25L22 5V24L19 29H5Z" fill="#32b8c8" stroke="#0c3c48" strokeWidth="1.8" />
          <path d="M6 6H19V28H6Z" fill="#3fd0e0" />
          <path d="M5 5H20V29M20 5L25 0" stroke="#0c3c48" strokeWidth="1.5" />
          <path d="M1 20L5 11H29L24 20Z" stroke="#fff" strokeWidth="1.6" />
          <path d="M1 21L5 12M24 21L29 12" stroke="#1a8c98" strokeWidth="1.2" />
        </>
      ),
    },
    {
      name: 'Only Current Body',
      icon: (
        <>
          <path d="M4 10L11 3H27V20L20 27H4Z" fill="#158a98" stroke="#08303c" strokeWidth="2" />
          <rect x="4" y="10" width="16" height="17" fill="#4fdcec" stroke="#08303c" strokeWidth="2" />
          <path d="M9 13V22H17" stroke="#08303c" strokeWidth="1.6" />
        </>
      ),
    },
    {
      name: 'Select',
      icon: (
        <>
          <rect x="3" y="3" width="26" height="24" fill="#e8e8f2" stroke="#8a8a95" strokeDasharray="2 1.5" />
          <path d="M1 1H5V5H1ZM1 25H5V29H1Z" fill="#209a98" />
        </>
      ),
    },
  ],
];

const Toolbar = () => (
  <footer className="flex h-[52px] shrink-0 overflow-hidden border-t-2 border-[#9c9cb4] bg-linear-to-b from-white via-[#cfcfe3] via-40% to-[#cbcbe0]">
    <div className="-ml-7 flex">
      {GROUPS.map((group, i) => (
        <div key={i} className="flex" role="toolbar">
          {i > 0 && (
            <div className={`flex justify-center ${i === GROUPS.length - 1 ? 'w-8' : 'w-[29px]'}`}>
              <div className="mt-1.5 ml-1 h-[25px] w-1 border-r-2 border-r-[#a5a5b5] bg-white" />
            </div>
          )}
          {group.map((tool) => (
            <button
              key={tool.name}
              type="button"
              aria-label={tool.name}
              className={`relative flex shrink-0 items-start pt-3.5 ${
                tool.slim ? 'w-[34px] pl-0.5' : tool.menu ? 'w-11 pl-1.5' : 'w-[42px] pl-1.5'
              }`}
            >
              <Svg>{tool.icon}</Svg>
              {tool.menu && (
                <svg width="12" height="6" className="absolute right-0 bottom-0">
                  <path d="M0 0H11L6 6Z" fill="#000" />
                </svg>
              )}
            </button>
          ))}
        </div>
      ))}
    </div>
  </footer>
);

const App = () => (
  <div className="flex h-screen flex-col overflow-hidden bg-[#353563] font-['Open_Sans','Noto_Sans_CJK_SC',sans-serif]">
    <main className="relative flex-1 overflow-hidden">
      <Scene />
      <div className="absolute inset-y-0 left-0 w-[3px] border-r border-[#6c6c78] bg-[#a9a9bb]" />
      <SpecTree />
      <div className="absolute top-[634px] left-[422px] font-[Lato,'Noto_Sans_CJK_SC',sans-serif] text-[23px] leading-[30px] whitespace-nowrap text-[#e31b28]">
        <p>1.点击测量命令</p>
        <p>2.选择单个/多个Body，切记不要直接选Part会循环更新错误</p>
        <p>3.创建几何</p>
        <p>4.关联/非关联几何，重心，确定</p>
      </div>
      <CreationOfGeometry />
      <MeasureInertia />
    </main>
    <Toolbar />
  </div>
);

export default App;
